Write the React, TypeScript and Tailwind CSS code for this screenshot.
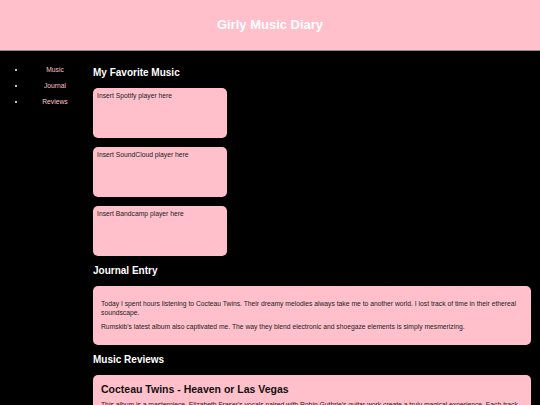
import React from "react";

const players = [
  "Insert Spotify player here",
  "Insert SoundCloud player here",
  "Insert Bandcamp player here",
];

export default function App() {
  return (
    <div
      className="w-[540px] h-[405px] overflow-hidden bg-black"
      style={{ fontFamily: '"Liberation Sans", Arial, sans-serif' }}
    >
      <header className="h-[51px] bg-[#ffc0cb] border-b border-[#8a8a8a] flex items-center justify-center">
        <h1 className="text-[13px] font-bold text-white leading-[16px] mt-[-1px]">Girly Music Diary</h1>
      </header>
      <div className="flex">
        <nav className="w-[84px] shrink-0 pt-[14.5px]">
          <ul className="list-disc pl-[26px] text-white marker:text-white">
            <li className="text-center text-[6.75px] leading-[8px] mb-[8px]">
              <a className="text-[#ffc0cb]">Music</a>
            </li>
            <li className="text-center text-[6.75px] leading-[8px] mb-[8px]">
              <a className="text-[#ffc0cb]">Journal</a>
            </li>
            <li className="text-center text-[6.75px] leading-[8px] mb-[8px]">
              <a className="text-[#ffc0cb]">Reviews</a>
            </li>
          </ul>
        </nav>
        <main className="flex-1 pl-[9px] pr-[9px] pt-[16px] flex flex-col">
          <h2 className="text-[10px] font-bold text-white leading-[11.5px]">My Favorite Music</h2>
          {players.map((p, i) => (
            <div
              key={p}
              className={
                (i === 0 ? "mt-[9.5px] " : "mt-[9px] ") +
                "w-[134px] h-[50px] bg-[#ffc0cb] rounded-[5px] px-[4px] pt-[4px] text-[6.75px] leading-[8px] text-[#222]"
              }
            >
              {p}
            </div>
          ))}
          <h2 className="mt-[9px] text-[10px] font-bold text-white leading-[11.5px]">Journal Entry</h2>
          <div className="mt-[9.5px] h-[59px] bg-[#ffc0cb] rounded-[5px] px-[8px] py-[8.5px] text-[6.75px] leading-[9px] text-[#222]">
            <p className="my-[4.5px]">
              Today I spent hours listening to Cocteau Twins. Their dreamy melodies always take me to another world. I lost track of time in their ethereal soundscape.
            </p>
            <p className="mt-[4px]">
              Rumskib's latest album also captivated me. The way they blend electronic and shoegaze elements is simply mesmerizing.
            </p>
          </div>
          <h2 className="mt-[8.5px] text-[10px] font-bold text-white leading-[11.5px]">Music Reviews</h2>
          <div className="mt-[9.5px] bg-[#ffc0cb] rounded-[5px] px-[8px] pt-[8px] pb-[8px] text-[#222]">
            <h3 className="text-[10.5px] font-bold leading-[12px] text-[#111]">Cocteau Twins - Heaven or Las Vegas</h3>
            <p className="mt-[5px] text-[6.75px] leading-[9px]">
              This album is a masterpiece. Elizabeth Fraser's vocals paired with Robin Guthrie's guitar work create a truly magical experience. Each track transports you to a dreamlike state.
            </p>
          </div>
        </main>
      </div>
    </div>
  );
}
